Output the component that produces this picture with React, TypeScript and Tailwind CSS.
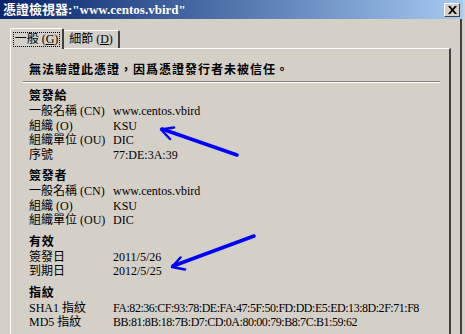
import React from 'react';

type Row = { label: string; value: string };

type Group = { title: string; rows: Row[]; tight?: boolean };

const groups: Group[] = [
  {
    title: '簽發給',
    rows: [
      { label: '一般名稱 (CN)', value: 'www.centos.vbird' },
      { label: '組織 (O)', value: 'KSU' },
      { label: '組織單位 (OU)', value: 'DIC' },
      { label: '序號', value: '77:DE:3A:39' },
    ],
  },
  {
    title: '簽發者',
    rows: [
      { label: '一般名稱 (CN)', value: 'www.centos.vbird' },
      { label: '組織 (O)', value: 'KSU' },
      { label: '組織單位 (OU)', value: 'DIC' },
    ],
  },
  {
    title: '有效',
    rows: [
      { label: '簽發日', value: '2011/5/26' },
      { label: '到期日', value: '2012/5/25' },
    ],
  },
  {
    title: '指紋',
    tight: true,
    rows: [
      { label: 'SHA1 指紋', value: 'FA:82:36:CF:93:78:DE:FA:47:5F:50:FD:DD:E5:ED:13:8D:2F:71:F8' },
      { label: 'MD5 指紋', value: 'BB:81:8B:18:7B:D7:CD:0A:80:00:79:B8:7C:B1:59:62' },
    ],
  },
];

export default function App() {
  return (
    <div className="relative w-[465px] h-[334px] overflow-hidden bg-[#d4d0c8] font-['Liberation_Serif','Noto_Sans_CJK_TC',serif] text-[12px] text-black">
      {/* title bar */}
      <div className="flex h-[19px] w-[463px] items-center justify-between bg-gradient-to-r from-[#0a246a] to-[#a6caf0] pl-[3px] pr-[3px]">
        <span className="font-['Liberation_Serif','Noto_Sans_CJK_TC',serif] text-[13px] font-bold leading-[19px] text-white">
          憑證檢視器:"www.centos.vbird"
        </span>
        <button className="flex h-[14px] w-[16px] items-center justify-center border border-t-white border-l-white border-r-[#404040] border-b-[#404040] bg-[#d4d0c8]">
          <svg width="9" height="8" viewBox="0 0 9 8">
            <path d="M0 0h2.2l2.3 2.8L6.8 0H9L5.7 4 9 8H6.8L4.5 5.2 2.2 8H0l3.3-4z" fill="#000" />
          </svg>
        </button>
      </div>

      <div className="flex">
        <div className="w-[460px] pl-[10px]">
          {/* tabs */}
          <div className="mt-[9px] flex h-[20px] items-end">
            <div className="relative z-10 flex h-[21px] w-[54px] -mb-px items-center justify-center rounded-t-[2px] border-l border-t border-r-2 border-l-white border-t-white border-r-[#404040] bg-[#d4d0c8]">
              <span className="flex h-[15px] items-center border border-dotted border-black px-[1px] leading-[13px]">
                一般 (<u>G</u>)
              </span>
            </div>
            <div className="flex h-[18px] w-[56px] items-center justify-center rounded-t-[2px] border-t border-r-2 border-t-white border-r-[#404040] bg-[#d4d0c8] leading-[13px]">
              細節 (<u>D</u>)
            </div>
          </div>

          {/* panel */}
          <div className="h-[300px] w-[441px] border-l border-t border-r-2 border-l-white border-t-white border-r-[#404040] pl-[18px] pr-[10px] pt-[12px]">
            <p className="h-[15px] font-['Noto_Sans_CJK_TC',sans-serif] font-bold leading-[15px] tracking-[1px]">
              無法驗證此憑證，因爲憑證發行者未被信任。
            </p>
            <div className="ml-[-6px] mt-[5px] h-[2px] w-[417px] border-t border-b border-t-[#808080] border-b-white" />
            <div className="mt-[5px]">
              {groups.map((g, gi) => (
                <div key={g.title} className={gi > 0 ? 'mt-[6px]' : ''}>
                  <div className="h-[16px] font-bold leading-[16px] tracking-[0.7px]">{g.title}</div>
                  {g.rows.map((r) => (
                    <div key={r.label} className="flex h-[14.5px] leading-[14.5px] whitespace-nowrap">
                      <span className="w-[84px] shrink-0">{r.label}</span>
                      <span className={g.tight ? 'tracking-[-0.47px]' : ''}>{r.value}</span>
                    </div>
                  ))}
                </div>
              ))}
            </div>
          </div>
        </div>
        <div className="w-[2px] h-[320px] bg-[#404040]" />
      </div>

      {/* annotation arrows */}
      <svg className="pointer-events-none absolute left-0 top-0" width="465" height="334">
        <g stroke="#0000ff" fill="none" strokeLinecap="round" strokeLinejoin="round">
          <path d="M237 155 L162 129" strokeWidth="3.5" />
          <path d="M174 127.5 L161 129.5 L170 139" strokeWidth="2.5" />
          <path d="M254 236 L173 266" strokeWidth="3.5" />
          <path d="M180.5 257.5 L172 267 L185 269.5" strokeWidth="2.5" />
        </g>
      </svg>
    </div>
  );
}
